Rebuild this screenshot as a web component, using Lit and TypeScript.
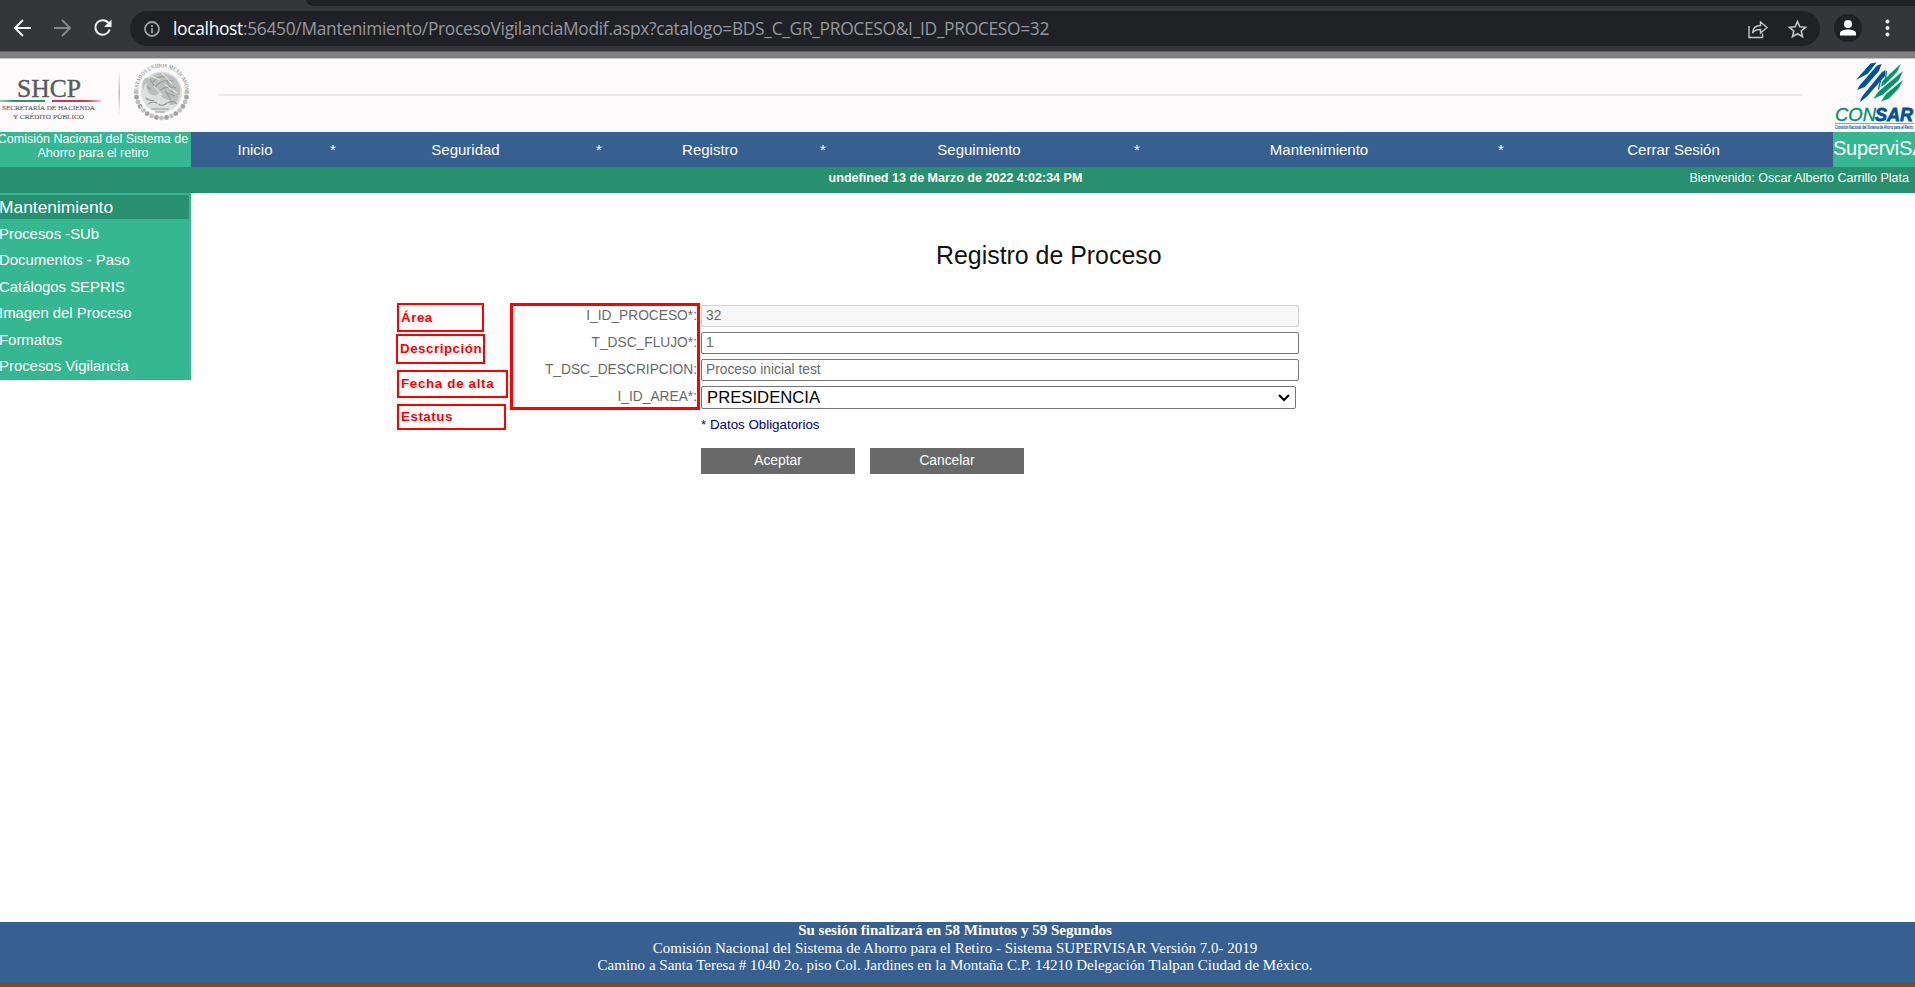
import { LitElement, html, css, svg } from "lit";
import { customElement } from "lit/decorators.js";

@customElement("browser-bar")
class BrowserBar extends LitElement {
  static styles = css`
    :host { display: block; height: 51px; background: #35363a; position: relative; }
    .strip { position: absolute; top: 0; left: 306px; right: 0; height: 6px; background: #202124; border-bottom-left-radius: 8px 6px; }
    .row { display: flex; align-items: center; height: 35px; padding-top: 11px; }
    .nav { display: flex; width: 130px; height: 35px; flex: none; }
    .pill { display: flex; align-items: center; width: 1690px; height: 35px; border-radius: 18px; background: #202124; flex: none; box-sizing: border-box; padding-left: 14px; }
    .url { font: 17.4px/24px "Open Sans", "Noto Sans", sans-serif; color: #94989d; margin-left: 13px; width: 1571px; white-space: nowrap; letter-spacing: -0.32px; position: relative; top: -1px; }
    .url b { font-weight: 400; color: #fff; }
    svg { display: block; flex: none; }
  `;
  render() {
    return html`
      <div class="strip"></div>
      <div class="row">
        <svg class="nav" width="130" height="35" viewBox="0 11 130 35" fill="none" stroke-width="2">
          <path d="M31 28H15.500M23 20l-8 8 8 8" stroke="#f1f3f4"/>
          <path d="M54 28h15.500M62 20l8 8-8 8" stroke="#85868a"/>
          <path d="M108.500 23a7.300 7.300 0 1 0 1.200 6.500" stroke="#f1f3f4"/>
          <path d="M111.500 19.500v7.500h-7.500z" fill="#f1f3f4"/>
        </svg>
        <div class="pill">
          <svg width="16" height="16" viewBox="0 0 16 16" fill="none" stroke="#9aa0a6" stroke-width="1.800"><circle cx="8" cy="8" r="7"/><path d="M8 7v5M8 4v2"/></svg>
          <span class="url"><b>localhost</b>:56450/Mantenimiento/ProcesoVigilanciaModif.aspx?catalogo=BDS_C_GR_PROCESO&amp;I_ID_PROCESO=32</span>
          <svg width="70" height="30" viewBox="1744 13 70 30" fill="none" stroke="#c4c7c9" stroke-width="1.400">
            <path d="M1749 25v11.500h13.500v-4M1752.500 32c.5-5.500 3.500-7.500 8-7.500V21l6.500 5.500-6.500 5.500v-3.500c-4 0-6 .5-8 3.500z"/>
            <path d="M1797.500 20.500l2.300 5.300 5.700.5-4.300 3.800 1.300 5.600-5-3-5 3 1.300-5.600-4.300-3.800 5.700-.5z" stroke-width="1.600"/>
          </svg>
        </div>
        <svg width="95" height="35" viewBox="1820 11 95 35">
          <circle cx="1848" cy="28" r="14" fill="#202124"/>
          <circle cx="1848" cy="24" r="4" fill="#fff"/><path d="M1840 35.500v-2c0-3 4-4 8-4s8 1 8 4v2z" fill="#fff"/>
          <g fill="#f1f3f4"><circle cx="1887.500" cy="21.500" r="2"/><circle cx="1887.500" cy="28" r="2"/><circle cx="1887.500" cy="34.500" r="2"/></g>
        </svg>
      </div>`;
  }
}

@customElement("site-header")
class SiteHeader extends LitElement {
  static styles = css`
    :host { display: flex; height: 73px; background: #fcfafb; align-items: center; overflow: hidden; }
    svg { display: block; flex: none; }
    .line { flex: none; width: 1585px; height: 2px; background: #ebeaea; margin: 0 31px 1px 18px; }
    text { font-family: "Liberation Serif", serif; }
    .sans { font-family: "Liberation Sans", sans-serif; }
  `;
  render() {
    const leaves = Array.from({ length: 17 }, (_, i) => {
      const a = ((i * 11.5 - 2) * Math.PI) / 180;
      return svg`<circle cx=${161.5 + 25.3 * Math.cos(a)} cy=${93 + 25 * Math.sin(a)} r="2.4" fill=${i % 2 ? "#a0a3a2" : "#c0c2c1"}/>`;
    });
    return html`
      <svg width="200" height="73" viewBox="0 59 200 73">
        <defs>
          <linearGradient id="g" x1="0" x2="1"><stop offset="0" stop-color="#9fcfb8"/><stop offset=".3" stop-color="#2f9565"/><stop offset="1" stop-color="#2f9565"/></linearGradient>
          <linearGradient id="r" x1="0" x2="1"><stop offset="0" stop-color="#cd3558"/><stop offset=".7" stop-color="#cd3558"/><stop offset="1" stop-color="#f0c5cf"/></linearGradient>
          <linearGradient id="v" x1="0" x2="0" y1="0" y2="1"><stop offset="0" stop-color="#fcfafb"/><stop offset=".5" stop-color="#b9b9b9"/><stop offset="1" stop-color="#fcfafb"/></linearGradient>
          <path id="arc" d="M138 91A23.500 23.500 0 0 1 185 91"/>
        </defs>
        <text x="17" y="96.500" font-size="25.500" textLength="64" lengthAdjust="spacingAndGlyphs" fill="#58595b" stroke="#58595b" stroke-width=".4">SHCP</text>
        <rect x="0" y="100" width="45" height="2" fill="url(#g)"/><rect x="52" y="100" width="49" height="2" fill="url(#r)"/>
        <text x="2" y="110.300" font-size="7" textLength="93" lengthAdjust="spacingAndGlyphs" fill="#666" stroke="#666" stroke-width=".15">SECRETARÍA DE HACIENDA</text>
        <text x="13" y="118.800" font-size="7" textLength="71" lengthAdjust="spacingAndGlyphs" fill="#666" stroke="#666" stroke-width=".15">Y CRÉDITO PÚBLICO</text>
        <rect x="118.500" y="70" width="1.500" height="46" fill="url(#v)"/>
        <text font-size="5.800" font-weight="700" fill="#969a99"><textPath href="#arc" textLength="73" lengthAdjust="spacingAndGlyphs">ESTADOS UNIDOS MEXICANOS</textPath></text>
        <circle cx="161.500" cy="92" r="20.500" fill="#dcdddd"/>
        ${leaves}
        <path d="M150 78q7-7 16-4 12 3 14 14 1 12-8 18-4-2-2-6-9 0-10-8-3 5-8 3-7-4-5-12-4 2-3 7-4-6 1-12z" fill="#bcbfbe"/>
        <path d="M153 82q6-7 12-5m-10 10q8-9 18-6m-13 9q8-5 16-2m-9 5l8 3M145 97q5 5 9 3m-6 4q6-4 10 0 5 3 9-1 6-3 10 1m-26 5h18m-14 3h10M147 86l4 4m-1-11l4 7m11 4l6 10m-4-19l6 12" fill="none" stroke="#989c9b" stroke-width="1.200"/>
        <path d="M151 76l9 4m2-7l10 11m-18 2l8 9m2-11l13 9m-34 5l6-2m8 9l3-5m9 10l3-5m-29 5l-3-4" fill="none" stroke="#eceded" stroke-width="1"/>
      </svg>
      <div class="line"></div>
      <svg width="81" height="73" viewBox="1834 59 81 73">
        <g fill="#00529b">
          <path d="M1870.500 63.500l6-1-8.500 11-12 6.500 3-3.500z"/>
          <path d="M1877 65.500l4.500-1.500-2.500 7-14 16-8 3 3-5z"/>
          <path d="M1882 72l3.500-2-.5 6-18 20.500-7.500 6 3-6.500z"/>
        </g>
        <g fill="#009668">
          <path d="M1901 63.500l-4 8.500-11.500 12-5 3 2-6z"/>
          <path d="M1903 71l-4 9-16 14.500-10 4.500 6-8z"/>
          <path d="M1903 80l-4 8-10 10.500-8 3 5-7.500z"/>
        </g>
        <path d="M1886.500 71l-1.500 11 1-2M1880.500 80.500l-2 9" stroke="#00739a" stroke-width="1.300" fill="none"/>
        <text class="sans" x="1835" y="121" font-size="18.300" font-style="italic" textLength="41" lengthAdjust="spacingAndGlyphs" fill="#009068" stroke="#009068" stroke-width=".3">CON</text>
        <text class="sans" x="1875" y="121" font-size="18.300" font-weight="700" font-style="italic" textLength="38" lengthAdjust="spacingAndGlyphs" fill="#00529b" stroke="#00529b" stroke-width=".8">SAR</text>
        <text class="sans" x="1835" y="129" font-size="5.800" textLength="78" lengthAdjust="spacingAndGlyphs" fill="#1c60a5" stroke="#1c60a5" stroke-width=".2">Comisión Nacional del Sistema de Ahorro para el Retiro</text>
        <path d="M1835 123.500h79" stroke="#5a8fc0" stroke-width=".8"/>
      </svg>`;
  }
}

@customElement("app-root")
class AppRoot extends LitElement {
  static styles = css`
    :host { display: flex; flex-direction: column; position: relative; width: 1915px; height: 987px; overflow: hidden; background: #fff; font-family: "Liberation Sans", Arial, sans-serif; }
    .gap { height: 8px; background: #808080; border-top: 1px solid #646464; border-bottom: 1px solid #c4c3c3; box-sizing: border-box; flex: none; }
    .menu { display: grid; grid-template-columns: 191px 128px 28px 237px 30px 192px 34px 278px 38px 326px 38px 307px 6px 82px; height: 35px; background: #376091; color: #fff; font-size: 15px; line-height: 35px; text-align: center; flex: none; white-space: nowrap; }
    .org { background: #35b790; font-size: 12.5px; line-height: 14px; }
    .org div { margin-left: -5px; width: 196px; }
    .brand { background: #35b790; font-size: 20px; line-height: 32px; text-align: left; overflow: hidden; letter-spacing: -0.25px; }
    .status { display: grid; grid-template-columns: 1fr 320px 1fr; height: 26px; background: #29906f; color: #fff; font-size: 12.5px; line-height: 23px; flex: none; }
    .date { font-weight: 700; text-align: center; font-size: 12.55px; position: relative; left: -2px; }
    .user { text-align: right; padding-right: 6px; }
    .body { display: flex; flex: 1; }
    .side { width: 191px; height: 187px; background: #35b790; color: #fff; font-size: 14.9px; box-sizing: border-box; padding-top: 2px; flex: none; }
    .head { width: 189px; height: 24px; line-height: 24px; background: #29906f; font-size: 17.4px; text-indent: -1px; margin-bottom: 2px; }
    .item { height: 26.4px; line-height: 26px; text-indent: -1px; }
    .main { padding-top: 46px; width: 1724px; }
    h1 { font-weight: 400; font-size: 24.9px; line-height: 32px; margin: 0 0 34px 745px; color: #111; }
    .form { display: grid; grid-template-columns: 506px 598px; column-gap: 4px; row-gap: 5px; font-size: 13.75px; color: #696969; }
    label { text-align: right; line-height: 22px; height: 22px; }
    .field { height: 22px; box-sizing: border-box; border: 1px solid #767676; border-radius: 2px; line-height: 20px; padding-left: 4px; }
    .off { background: #f8f8f8; border-color: #d0d0d0; }
    .select { height: 23px; width: 595px; color: #000; font-size: 16.7px; line-height: 20px; padding: 0 5px; display: flex; justify-content: space-between; align-items: center; }
    .note { margin: 7px 0 0 510px; color: #000080; font-size: 13.33px; line-height: 17px; }
    .buttons { display: flex; gap: 15px; margin: 15px 0 0 510px; }
    .btn { width: 154px; height: 26px; line-height: 25px; background: #696969; color: #fff; font-size: 13.8px; text-align: center; }
    .foot { height: 61px; padding-right: 5px; background: #376091; border-bottom: 4px solid #7a5016; color: #fff; text-align: center; font: 15.02px/17.5px "Liberation Serif", serif; flex: none; }
    .mark { position: absolute; border: 2px solid #f00; box-sizing: border-box; color: #f00; font-weight: 700; font-size: 13.4px; letter-spacing: 0.5px; padding-left: 2px; white-space: nowrap; }
    .a { left: 397px; top: 303px; width: 87px; height: 29px; line-height: 26px; }
    .b { left: 396px; top: 334px; width: 89px; height: 30px; line-height: 26px; }
    .c { left: 397px; top: 370px; width: 111px; height: 28px; line-height: 24px; letter-spacing: 0.65px; }
    .d { left: 397px; top: 404px; width: 109px; height: 26px; line-height: 22px; }
    .e { left: 510px; top: 303px; width: 190px; height: 107px; border-width: 3px; }
  `;
  render() {
    const menu = ["Inicio", "*", "Seguridad", "*", "Registro", "*", "Seguimiento", "*", "Mantenimiento", "*", "Cerrar Sesión", ""];
    const items = ["Procesos -SUb", "Documentos - Paso", "Catálogos SEPRIS", "Imagen del Proceso", "Formatos", "Procesos Vigilancia"];
    return html`
      <browser-bar></browser-bar>
      <div class="gap"></div>
      <site-header></site-header>
      <div class="menu"><div class="org"><div>Comisión Nacional del Sistema de<br>Ahorro para el retiro</div></div>${menu.map((m) => html`<span>${m}</span>`)}<div class="brand">SuperviSAR</div></div>
      <div class="status"><span></span><span class="date">undefined 13 de Marzo de 2022 4:02:34 PM</span><span class="user">Bienvenido: Oscar Alberto Carrillo Plata</span></div>
      <div class="body">
        <div class="side"><div class="head">Mantenimiento</div>${items.map((i) => html`<div class="item">${i}</div>`)}</div>
        <div class="main">
          <h1>Registro de Proceso</h1>
          <div class="form">
            <label>I_ID_PROCESO*:</label><div class="field off">32</div>
            <label>T_DSC_FLUJO*:</label><div class="field">1</div>
            <label>T_DSC_DESCRIPCION:</label><div class="field">Proceso inicial test</div>
            <label>I_ID_AREA*:</label><div class="field select"><span>PRESIDENCIA</span><svg width="12" height="8" viewBox="0 0 12 8"><path d="M1 1l5 5 5-5" fill="none" stroke="#000" stroke-width="2"/></svg></div>
          </div>
          <div class="note">* Datos Obligatorios</div>
          <div class="buttons"><div class="btn">Aceptar</div><div class="btn">Cancelar</div></div>
        </div>
      </div>
      <div class="foot"><b>Su sesión finalizará en 58 Minutos y 59 Segundos</b><br>Comisión Nacional del Sistema de Ahorro para el Retiro - Sistema SUPERVISAR Versión 7.0- 2019<br>Camino a Santa Teresa # 1040 2o. piso Col. Jardines en la Montaña C.P. 14210 Delegación Tlalpan Ciudad de México.</div>
      <div class="mark a">Área</div><div class="mark b">Descripción</div><div class="mark c">Fecha de alta</div><div class="mark d">Estatus</div><div class="mark e"></div>`;
  }
}
